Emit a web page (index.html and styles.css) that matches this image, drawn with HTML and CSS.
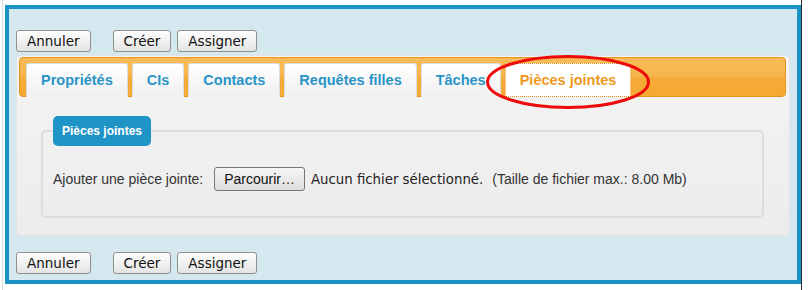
FILE: index.html
```html
<!DOCTYPE html>
<html lang="fr">
<head>
<meta charset="utf-8">
<title>Pièces jointes</title>
<link rel="stylesheet" href="styles.css">
</head>
<body>
<div class="page">
  <div class="frame">
    <div class="actions">
      <button class="btn">Annuler</button>
      <button class="btn btn-create">Créer</button>
      <button class="btn">Assigner</button>
    </div>
    <div class="panel">
      <div class="tabbar">
        <div class="tab">Propriétés</div>
        <div class="tab">CIs</div>
        <div class="tab">Contacts</div>
        <div class="tab">Requêtes filles</div>
        <div class="tab">Tâches</div>
        <div class="tab tab-active">Pièces jointes</div>
      </div>
      <div class="panel-body">
        <fieldset class="group">
          <legend class="group-title">Pièces jointes</legend>
          <div class="upload-row">
            <span class="upload-label">Ajouter une pièce jointe:</span>
            <button class="browse">Parcourir…</button>
            <span class="file-status">Aucun fichier sélectionné.</span>
            <span class="file-limit">(Taille de fichier max.: 8.00 Mb)</span>
          </div>
        </fieldset>
      </div>
    </div>
    <div class="actions actions-bottom">
      <button class="btn">Annuler</button>
      <button class="btn btn-create">Créer</button>
      <button class="btn">Assigner</button>
    </div>
  </div>
</div>
<svg class="highlight" width="170" height="60" viewBox="0 0 170 60" aria-hidden="true">
  <ellipse cx="82" cy="28" rx="80.5" ry="25.5" fill="none" stroke="#ee0a0a" stroke-width="3"/>
</svg>
</body>
</html>
```

FILE: styles.css
```css
html, body {
  margin: 0;
  padding: 0;
  background: #ffffff;
}

body {
  position: relative;
  width: 808px;
  height: 290px;
  overflow: hidden;
  font-family: "Liberation Sans", Arial, sans-serif;
  font-size: 14px;
  color: #333333;
}

.page {
  box-sizing: content-box;
  width: 796px;
  height: 279px;
  margin-left: 2px;
  padding: 5px 0 6px 2px;
  border-left: 1px solid #dadada;
  border-right: 1px solid #2a2a2a;
}

.frame {
  box-sizing: border-box;
  width: 796px;
  height: 279px;
  border: 4px solid #1b92c6;
  background: #d5e7ef;
  padding: 21px 0 6px 7px;
  display: flex;
  flex-direction: column;
}

.actions {
  display: flex;
  align-items: center;
  height: 22px;
}

.actions-bottom {
  margin-top: 16px;
}

.btn {
  box-sizing: border-box;
  height: 22px;
  padding: 0 10px;
  margin: 0;
  border: 1px solid #8f8f8f;
  border-radius: 3px;
  background: linear-gradient(#fefefe, #e4e4e4);
  font-family: "DejaVu Sans", sans-serif;
  font-size: 13.5px;
  color: #111111;
  line-height: 20px;
}

.btn + .btn {
  margin-left: 6px;
}

.btn + .btn-create {
  margin-left: 22px;
}

.panel {
  box-sizing: border-box;
  width: 774px;
  height: 181px;
  margin-top: 3px;
  border: 1px solid #e4e4e4;
  border-radius: 4px;
  background: linear-gradient(#f4f4f4, #ececec);
  padding: 1px 3px 0 2px;
}

.tabbar {
  box-sizing: border-box;
  height: 40px;
  display: flex;
  gap: 4px;
  padding: 5px 0 0 6px;
  border: 1px solid #e5951c;
  border-radius: 4px;
  background: linear-gradient(#f8bb58 0%, #f6b54c 50%, #f4aa35 52%, #f4aa33 100%);
}

.tab {
  box-sizing: border-box;
  height: 34px;
  padding: 0 14px;
  border: 1px solid #dcdcdc;
  border-bottom: none;
  border-radius: 3px 3px 0 0;
  background: linear-gradient(#ffffff, #f0f0f0);
  font-weight: bold;
  font-size: 14.5px;
  line-height: 33px;
  color: #2a94c8;
  white-space: nowrap;
}

.tab-active {
  background: #ffffff;
  border: 1px dotted #e08f14;
  color: #f0991c;
  line-height: 32px;
}

.panel-body {
  padding: 19px 22px 0 22px;
}

.group {
  margin: 0;
  padding: 0 10px 25px 10px;
  border: 2px solid #dddddd;
  border-radius: 5px;
  min-width: 0;
}

.group-title {
  padding: 0 9px;
  height: 30px;
  line-height: 30px;
  border-radius: 5px;
  background: #1f95c7;
  color: #ffffff;
  font-weight: bold;
  font-size: 12px;
}

.upload-row {
  display: flex;
  align-items: center;
  margin-top: 21px;
  height: 24px;
  white-space: nowrap;
}

.upload-label {
  margin-right: 11px;
}

.browse {
  box-sizing: border-box;
  height: 24px;
  padding: 0 9px;
  margin: 0;
  border: 1px solid #777777;
  border-radius: 3px;
  background: linear-gradient(#f5f5f5, #dddddd);
  font-family: "Liberation Sans", Arial, sans-serif;
  font-size: 14px;
  color: #111111;
}

.file-status {
  margin-left: 6px;
  font-family: "DejaVu Sans", sans-serif;
  font-size: 13.3px;
  color: #222222;
}

.file-limit {
  margin-left: 9px;
}

.highlight {
  position: absolute;
  left: 486px;
  top: 54px;
}
```
